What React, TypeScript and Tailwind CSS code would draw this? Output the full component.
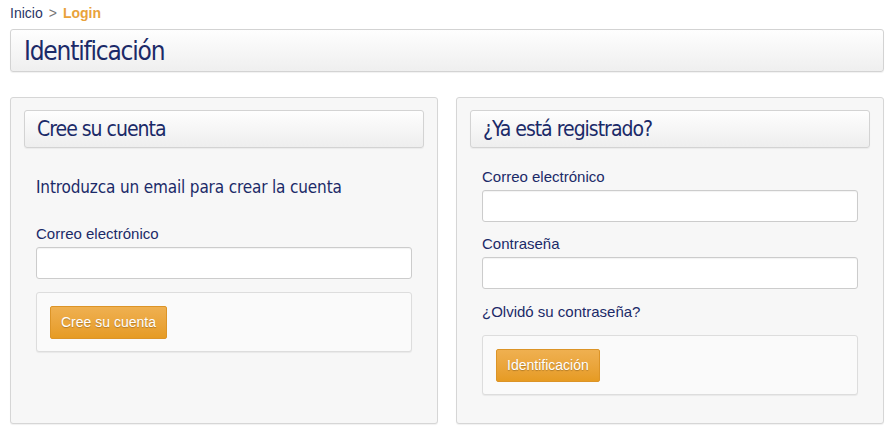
import React from "react";

const cond = { fontFamily: '"DejaVu Sans Condensed", "Liberation Sans Narrow", "Roboto", sans-serif' } as React.CSSProperties;

function BoxHeading({ children }: { children: React.ReactNode }) {
  return (
    <div className="h-[38px] rounded-[3px] border border-[#d3d3d3] bg-gradient-to-b from-[#fefefe] to-[#eeeeee] pl-[12px] flex items-center shadow-[0_1px_1px_rgba(0,0,0,0.05)]">
      <h2 className="text-[21px] text-[#1b2a68] tracking-[-1px] leading-none" style={cond}>
        {children}
      </h2>
    </div>
  );
}

function Field({ label, mt }: { label: string; mt: string }) {
  return (
    <div className={"flex flex-col " + mt}>
      <label className="text-[15px] text-[#1b2a68] leading-[18px] mb-[4px]">{label}</label>
      <input className="h-[32px] w-full rounded-[3px] border border-[#cccccc] bg-white shadow-[inset_0_1px_1px_rgba(0,0,0,0.05)] outline-none" />
    </div>
  );
}

function OrangeButton({ children }: { children: React.ReactNode }) {
  return (
    <button className="h-[33px] px-[10px] rounded-[2px] border border-[#dc9427] bg-gradient-to-b from-[#efb050] to-[#e69b22] text-white text-[14px] [text-shadow:0_1px_1px_rgba(0,0,0,0.25)]">
      {children}
    </button>
  );
}

function ButtonBox({ children }: { children: React.ReactNode }) {
  return (
    <div className="h-[60px] rounded-[3px] border border-[#dddddd] bg-[#fafafa] px-[13px] flex items-center shadow-[0_1px_1px_rgba(0,0,0,0.06)]">
      {children}
    </div>
  );
}

export default function App() {
  return (
    <div className="w-[893px] h-[440px] bg-white pl-[10px] pr-[9px]" style={{ fontFamily: '"Liberation Sans", Arial, sans-serif' }}>
      <div className="pt-[5px] h-[29px] text-[14px] leading-[16px]">
        <span className="text-[#2a3566]">Inicio</span>
        <span className="text-[#777] mx-[6px]">&gt;</span>
        <span className="text-[#e9a23b] font-bold">Login</span>
      </div>
      <div className="h-[43px] rounded-[3px] border border-[#d3d3d3] bg-gradient-to-b from-[#fefefe] to-[#efefef] pl-[13px] flex items-center shadow-[0_1px_1px_rgba(0,0,0,0.06)]">
        <h1 className="text-[26px] text-[#1b2a68] tracking-[-1.2px] leading-none" style={cond}>
          Identificación
        </h1>
      </div>
      <div className="mt-[25px] grid grid-cols-2 gap-[18px]">
        <div className="h-[327px] rounded-[3px] border border-[#d6d6d6] bg-[#f7f7f7] px-[13px] pt-[12px] shadow-[0_1px_1px_rgba(0,0,0,0.06)]">
          <BoxHeading>Cree su cuenta</BoxHeading>
          <div className="px-[12px]">
            <p className="mt-[29px] text-[17px] text-[#1b2a68] leading-[20px] tracking-[-0.15px]" style={cond}>
              Introduzca un email para crear la cuenta
            </p>
            <Field label="Correo electrónico" mt="mt-[28px]" />
            <div className="mt-[13px]">
              <ButtonBox>
                <OrangeButton>Cree su cuenta</OrangeButton>
              </ButtonBox>
            </div>
          </div>
        </div>
        <div className="h-[327px] rounded-[3px] border border-[#d6d6d6] bg-[#f7f7f7] px-[13px] pt-[12px] shadow-[0_1px_1px_rgba(0,0,0,0.06)]">
          <BoxHeading>¿Ya está registrado?</BoxHeading>
          <div className="px-[12px]">
            <Field label="Correo electrónico" mt="mt-[20px]" />
            <Field label="Contraseña" mt="mt-[13px]" />
            <div className="mt-[14px] text-[15px] leading-[18px] text-[#1b2a68]">¿Olvidó su contraseña?</div>
            <div className="mt-[14px]">
              <ButtonBox>
                <OrangeButton>Identificación</OrangeButton>
              </ButtonBox>
            </div>
          </div>
        </div>
      </div>
    </div>
  );
}
